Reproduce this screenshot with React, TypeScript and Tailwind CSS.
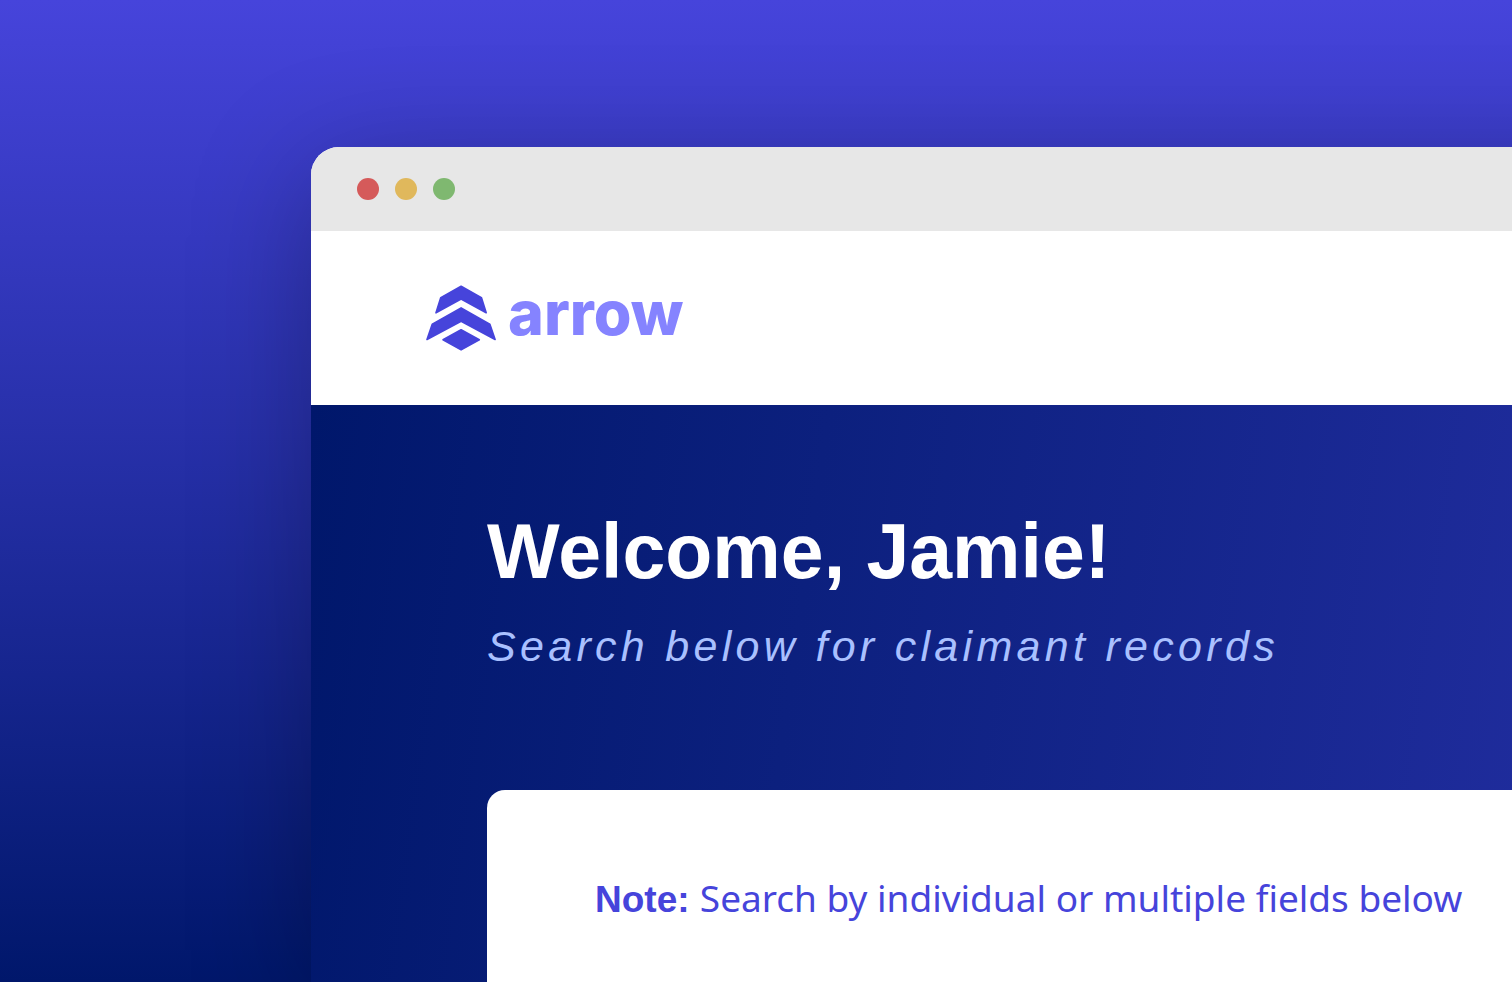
function LogoMark() {
  return (
    <svg viewBox="0 0 70 66" className="h-[66px] w-[70px] shrink-0" fill="#4644db" stroke="#4644db" strokeWidth="1.6" strokeLinejoin="round" aria-hidden="true">
      <path d="M35.1 1.2 55.4 12.6 60.2 27.8 35.1 14 10 27.8 14.8 12.6Z" />
      <path d="M35.1 22.9 63.8 39.1 69.1 54.5 35.1 36.2 1 54.5 6.3 39.1Z" />
      <path d="M35.1 44.8 53.3 54.8 35.1 64.9 17 54.8Z" />
    </svg>
  );
}

function TitleBar() {
  return (
    <div className="flex h-[84px] items-center gap-4 bg-[#e7e7e7] pl-[46px]">
      <button type="button" aria-label="Close" className="size-[22px] rounded-full bg-[#d55a5a]" />
      <button type="button" aria-label="Minimize" className="size-[22px] rounded-full bg-[#e0b85c]" />
      <button type="button" aria-label="Maximize" className="size-[22px] rounded-full bg-[#7fb870]" />
    </div>
  );
}

export default function App() {
  return (
    <div className="flex min-h-screen flex-col overflow-hidden bg-[linear-gradient(180deg,#4644db,#00176b)] pt-[147px] pl-[311px] font-['Liberation_Sans',Arial,sans-serif]">
      <div className="-mr-[200px] flex flex-1 flex-col overflow-hidden rounded-tl-[28px] bg-white shadow-[0_24px_120px_rgba(0,0,0,0.28)]">
        <TitleBar />
        <header className="flex h-[174px] items-center pl-[115px]">
          <a href="#" className="flex items-center gap-3">
            <LogoMark />
            <span className="pb-2.5 font-['Inter',sans-serif] text-[61px] leading-[64px] font-extrabold text-[#8583ff]">arrow</span>
          </a>
        </header>
        <main className="flex flex-1 flex-col bg-[linear-gradient(98deg,#00176b_0%,#0c207e_35%,#242fa4_100%)] pt-[101px] pl-44">
          <h1 className="text-[77px] leading-[90px] font-bold text-white">Welcome, Jamie!</h1>
          <p className="mt-[22px] text-[43px] leading-[56px] tracking-widest text-[#a9c0ff] italic">Search below for claimant records</p>
          <section className="mt-[116px] flex-1 rounded-tl-[18px] bg-white pt-[82px] pl-[108px]">
            <p className="text-[37px] leading-[52px] whitespace-nowrap text-[#4644db]">
              <strong>Note:</strong>{" "}
              <span className="font-['Noto_Sans',sans-serif]">Search by individual or multiple fields below</span>
            </p>
          </section>
        </main>
      </div>
    </div>
  );
}
